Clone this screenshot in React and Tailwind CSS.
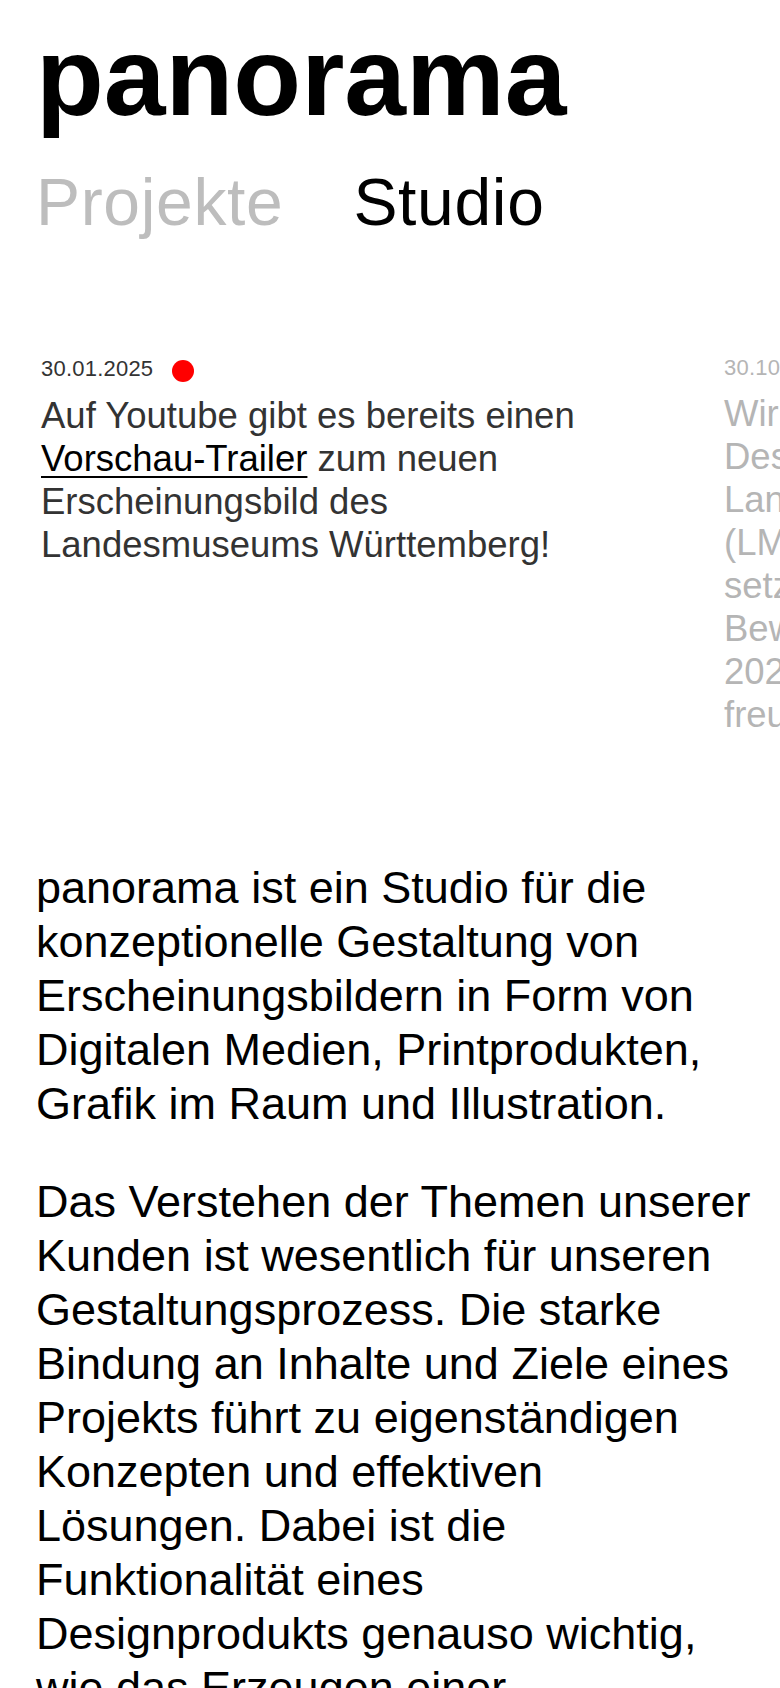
import React from 'react';

const news = [
  {
    date: '30.01.2025',
    fresh: true,
    body: (
      <>
        Auf Youtube gibt es bereits einen{' '}
        <a href="#" className="text-black underline decoration-[2px] underline-offset-[5px]">
          Vorschau-Trailer
        </a>{' '}
        zum neuen Erscheinungsbild des Landesmuseums Württemberg!
      </>
    ),
  },
  {
    date: '30.10.2024',
    fresh: false,
    body: [
      'Wir haben den Wettbewerb für das',
      'Designkonzept zur Neueröffnung des',
      'Landesmuseums Württemberg',
      '(LMW) gewonnen und',
      'setzen das neue Erscheinungsbild',
      'Bewerbungsstart im Frühjahr',
      '2025 um. Wir',
      'freuen uns sehr!',
    ].map((l) => (
      <span key={l} className="block whitespace-nowrap">
        {l}
      </span>
    )),
  },
];

const about = [
  [
    'panorama ist ein Studio für die',
    'konzeptionelle Gestaltung von',
    'Erscheinungsbildern in Form von',
    'Digitalen Medien, Printprodukten,',
    'Grafik im Raum und Illustration.',
  ],
  [
    'Das Verstehen der Themen unserer',
    'Kunden ist wesentlich für unseren',
    'Gestaltungsprozess. Die starke',
    'Bindung an Inhalte und Ziele eines',
    'Projekts führt zu eigenständigen',
    'Konzepten und effektiven',
    'Lösungen. Dabei ist die',
    'Funktionalität eines',
    'Designprodukts genauso wichtig,',
    'wie das Erzeugen einer',
    'starken visuellen Wirkung.',
  ],
];

export default function App() {
  return (
    <div className="min-h-screen w-full overflow-hidden bg-white font-['Liberation_Sans',Arial,sans-serif] text-black">
      {/* header */}
      <header className="px-[36px] pt-[22px]">
        <h1 className="text-[111px] font-bold leading-none">panorama</h1>
        <nav className="mt-[36px] flex gap-[70px] text-[66px] leading-none tracking-[0.01em]">
          <a href="#" className="text-[#bdbdbd]">Projekte</a>
          <a href="#" className="text-black">Studio</a>
        </nav>
      </header>

      {/* news ticker */}
      <section className="mt-[121px] flex gap-[103px] overflow-x-auto pl-[41px] [scrollbar-width:none]">
        {news.map((n, i) => (
          <article key={n.date} className="w-[580px] shrink-0">
            <div className="flex items-center gap-[19px]">
              <span className={`text-[22px] leading-[24px] tracking-[0.01em] ${i === 0 ? 'text-[#333]' : 'text-[#b5b5b5]'}`}>
                {n.date}
              </span>
              {n.fresh && <span className="mt-[4px] h-[22px] w-[22px] rounded-full bg-[#ff0000]" />}
            </div>
            <p className={`mt-[12px] text-[36.5px] leading-[43px] ${i === 0 ? 'text-[#333]' : 'text-[#b5b5b5]'}`}>
              {n.body}
            </p>
          </article>
        ))}
      </section>

      {/* about */}
      <main className="mt-[125px] px-[36px] text-[45px] leading-[54px]">
        {about.map((lines, i) => (
          <p key={i} className="mb-[44px]">
            {lines.map((l) => (
              <span key={l} className="block whitespace-nowrap">
                {l}
              </span>
            ))}
          </p>
        ))}
      </main>
    </div>
  );
}
